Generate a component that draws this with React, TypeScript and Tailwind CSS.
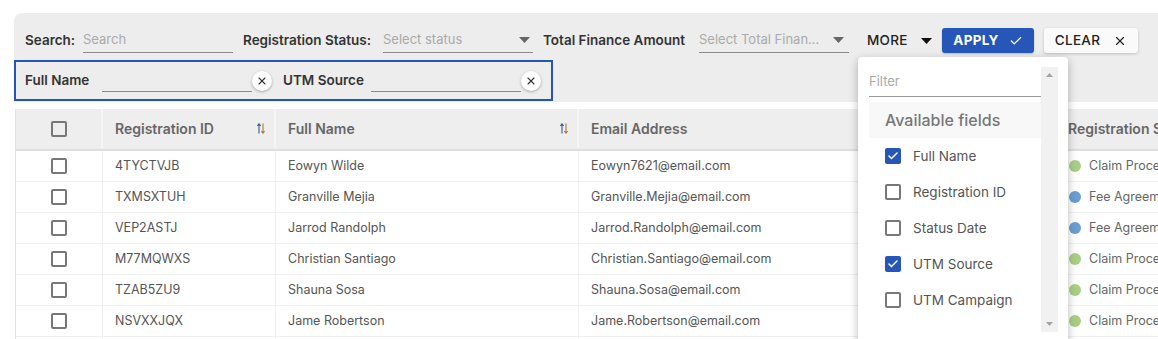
import { Check, X } from "lucide-react";

const rows = [
  { id: "4TYCTVJB", name: "Eowyn Wilde", email: "Eowyn7621@email.com", status: "Claim Processing", color: "bg-[#a9cf86]" },
  { id: "TXMSXTUH", name: "Granville Mejia", email: "Granville.Mejia@email.com", status: "Fee Agreement Sent", color: "bg-[#6b9fd1]" },
  { id: "VEP2ASTJ", name: "Jarrod Randolph", email: "Jarrod.Randolph@email.com", status: "Fee Agreement Sent", color: "bg-[#6b9fd1]" },
  { id: "M77MQWXS", name: "Christian Santiago", email: "Christian.Santiago@email.com", status: "Claim Processing", color: "bg-[#a9cf86]" },
  { id: "TZAB5ZU9", name: "Shauna Sosa", email: "Shauna.Sosa@email.com", status: "Claim Processing", color: "bg-[#a9cf86]" },
  { id: "NSVXXJQX", name: "Jame Robertson", email: "Jame.Robertson@email.com", status: "Claim Processing", color: "bg-[#a9cf86]" },
  { id: "B8KQ2LMN", name: "Dana Whitfield", email: "Dana.Whitfield@email.com", status: "Claim Processing", color: "bg-[#a9cf86]" },
];

const fields = [
  { label: "Full Name", checked: true },
  { label: "Registration ID", checked: false },
  { label: "Status Date", checked: false },
  { label: "UTM Source", checked: true },
  { label: "UTM Campaign", checked: false },
];

function Caret({ className }: { className: string }) {
  return (
    <svg width="11" height="6" viewBox="0 0 11 6" className={className}>
      <path d="M0 0h11L5.5 6z" fill="currentColor" />
    </svg>
  );
}

function SortIcon() {
  return (
    <svg width="8" height="11" viewBox="0 0 8 11" className="shrink-0">
      <path d="M2 10.5V1M0.4 2.8L2 0.8l1.6 2" stroke="#3a5c8a" strokeWidth="1.1" fill="none" />
      <path d="M6 0.5V10M4.4 8.2L6 10.2l1.6-2" stroke="#b07a3a" strokeWidth="1.1" fill="none" />
    </svg>
  );
}

function Box({ checked = false }: { checked?: boolean }) {
  if (checked)
    return (
      <div className="w-[16px] h-[16px] shrink-0 rounded-[2px] bg-[#2657b8] flex items-center justify-center">
        <Check size={12} strokeWidth={3} color="white" />
      </div>
    );
  return <div className="w-[16px] h-[16px] shrink-0 rounded-[2px] border-2 border-[#777]" />;
}

function ClearBtn() {
  return (
    <div className="w-[20px] h-[20px] rounded-full bg-white shadow-[0_1px_3px_rgba(0,0,0,0.3)] flex items-center justify-center shrink-0">
      <X size={12} strokeWidth={2.2} color="#333" />
    </div>
  );
}

const cols = "grid grid-cols-[87px_173px_303px_477px_220px]";

export default function App() {
  return (
    <div className="w-[1158px] h-[339px] overflow-hidden bg-white text-[13px] font-['Inter','Liberation_Sans',sans-serif]">
      {/* filter panel */}
      <div className="ml-[14px] mt-[13px] pt-[15px] pb-[1px] bg-[#ededed] rounded-tl-[8px]">
        <div className="flex items-center h-[25px] pl-[11px]">
          <span className="w-[48px] text-[13.5px] font-semibold text-[#333] whitespace-nowrap">Search:</span>
          <div className="ml-[10px] w-[150px] h-[25px] border-b border-[#8a8a8a] flex items-center text-[#aaa]">Search</div>
          <span className="ml-[10px] w-[130px] text-[13.5px] font-semibold text-[#333] whitespace-nowrap">Registration Status:</span>
          <div className="ml-[10px] w-[150px] h-[25px] border-b border-[#8a8a8a] flex items-center justify-between pr-[3px] text-[#aaa]">
            Select status
            <Caret className="text-[#666]" />
          </div>
          <span className="ml-[10px] w-[146px] text-[13.5px] font-semibold text-[#333] whitespace-nowrap">Total Finance Amount</span>
          <div className="ml-[10px] w-[150px] h-[25px] border-b border-[#8a8a8a] flex items-center justify-between pr-[5px] text-[#aaa]">
            <span className="truncate w-[122px]">Select Total Finance Amount</span>
            <Caret className="text-[#666]" />
          </div>
          <div className="relative ml-[18px] w-[65px] flex items-center">
            <span className="w-[41px] text-[13.5px] font-medium text-[#222] tracking-[0.3px]">MORE</span>
            <Caret className="ml-[13px] text-[#111]" />

            {/* fields dropdown */}
            <div className="absolute left-[-9px] top-[27px] z-10 w-[210px] h-[290px] bg-white rounded-[4px] shadow-[0_3px_10px_rgba(0,0,0,0.28)] flex pl-[11px] pr-[10px] pt-[10px]">
              <div className="w-[172px] flex flex-col overflow-hidden">
                <div className="h-[30px] shrink-0 border-b border-[#999] flex items-center text-[#aaa]">Filter</div>
                <div className="mt-[5px] h-[36px] shrink-0 bg-[#f8f8f8] flex items-center pl-[16px] text-[16px] font-medium text-[#777]">
                  Available fields
                </div>
                {fields.map((f) => (
                  <div key={f.label} className="h-[36px] shrink-0 flex items-center pl-[16px] gap-[12px] text-[13.5px] text-[#555]">
                    <Box checked={f.checked} />
                    {f.label}
                  </div>
                ))}
              </div>
              <div className="w-[17px] h-[265px] bg-[#f1f1f1] flex flex-col justify-between items-center py-[6px]">
                <svg width="7" height="4" viewBox="0 0 7 4"><path d="M0 4h7L3.5 0z" fill="#a3a3a3" /></svg>
                <svg width="7" height="4" viewBox="0 0 7 4"><path d="M0 0h7L3.5 4z" fill="#a3a3a3" /></svg>
              </div>
            </div>
          </div>
          <button className="ml-[10px] w-[92px] h-[25px] rounded-[3px] bg-[#2657b8] text-white text-[13.5px] font-bold tracking-[0.3px] flex items-center justify-center gap-[10px] shadow-[0_1px_2px_rgba(0,0,0,0.2)]">
            APPLY <Check size={14} strokeWidth={2.2} />
          </button>
          <button className="ml-[10px] w-[94px] h-[25px] rounded-[3px] bg-[#fafafa] text-[#222] text-[13.5px] font-medium tracking-[0.3px] flex items-center justify-center gap-[13px] shadow-[0_1px_3px_rgba(0,0,0,0.2)]">
            CLEAR <X size={14} strokeWidth={2} />
          </button>
        </div>

        <div className="mt-[7px] w-[539px] h-[41px] border-2 border-[#2356b5] flex items-center pl-[9px]">
          <span className="w-[77px] text-[13.5px] font-semibold text-[#333] whitespace-nowrap">Full Name</span>
          <div className="w-[150px] h-[22px] border-b border-[#8a8a8a]" />
          <ClearBtn />
          <span className="ml-[11px] w-[88px] text-[13.5px] font-semibold text-[#333] whitespace-nowrap">UTM Source</span>
          <div className="w-[150px] h-[22px] border-b border-[#8a8a8a]" />
          <ClearBtn />
        </div>
      </div>

      {/* table */}
      <div className="mt-[7px] ml-[15px] border-l border-[#e2e2e2] w-[1260px]">
        <div className={`${cols} h-[42px] pb-[1px] bg-[#eeeeee] border-b-2 border-[#dedede] text-[14px] font-semibold text-[#666]`}>
          <div className="flex items-center justify-center border-r-2 border-[#f6f6f6]">
            <Box />
          </div>
          <div className="flex items-center justify-between pl-[12px] pr-[9px] border-r-2 border-[#f6f6f6]">
            Registration ID <SortIcon />
          </div>
          <div className="flex items-center justify-between pl-[12px] pr-[9px] border-r-2 border-[#f6f6f6]">
            Full Name <SortIcon />
          </div>
          <div className="flex items-center pl-[12px] border-r-2 border-[#f6f6f6]">Email Address</div>
          <div className="flex items-center pl-[12px] whitespace-nowrap">Registration Status</div>
        </div>
        {rows.map((r) => (
          <div key={r.id} className={`${cols} h-[31px] border-b border-[#f0f0f0] text-[12.5px] text-[#555]`}>
            <div className="flex items-center justify-center border-r border-[#f0f0f0]">
              <Box />
            </div>
            <div className="flex items-center pl-[12px] border-r border-[#f0f0f0]">{r.id}</div>
            <div className="flex items-center pl-[12px] border-r border-[#f0f0f0]">{r.name}</div>
            <div className="flex items-center pl-[12px] border-r border-[#f0f0f0]">{r.email}</div>
            <div className="flex items-center pl-[13px] gap-[8px] whitespace-nowrap text-[#666]">
              <span className={`w-[12px] h-[12px] shrink-0 rounded-full ${r.color}`} />
              {r.status}
            </div>
          </div>
        ))}
      </div>
    </div>
  );
}
